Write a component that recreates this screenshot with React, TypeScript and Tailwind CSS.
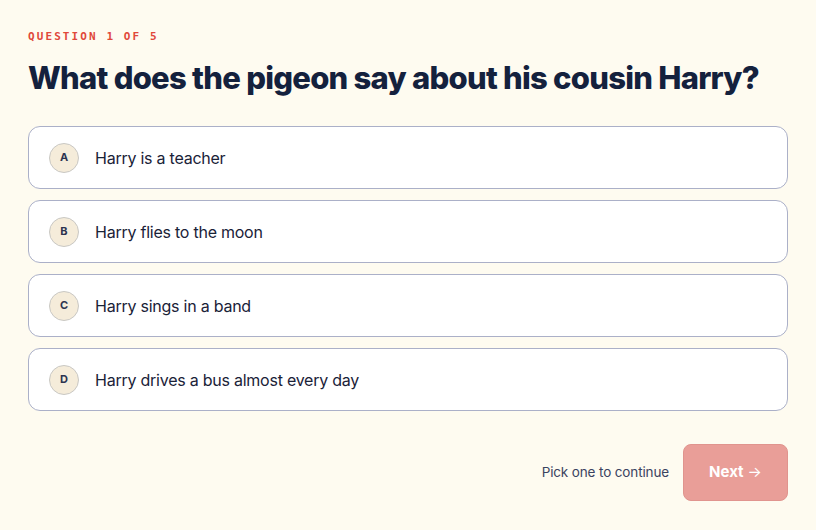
import React from "react";

const options = [
  { k: "A", t: "Harry is a teacher" },
  { k: "B", t: "Harry flies to the moon" },
  { k: "C", t: "Harry sings in a band" },
  { k: "D", t: "Harry drives a bus almost every day" },
];

export default function App() {
  return (
    <div className="w-[816px] h-[530px] bg-[#fefbf0] px-[28px] pt-[30px] flex flex-col" style={{ fontFamily: "Inter, 'Noto Sans', sans-serif" }}>
      <div className="text-[11px] font-bold tracking-[0.19em] text-[#e0483a] leading-[14px]" style={{ fontFamily: "'DejaVu Sans Mono', 'Liberation Mono', monospace" }}>
        QUESTION 1 OF 5
      </div>
      <h1 className="mt-[14px] text-[31px] font-extrabold text-[#14213d] tracking-[-0.024em] leading-[40px]">
        What does the pigeon say about his cousin Harry?
      </h1>
      <div className="mt-[28px] flex flex-col gap-[11px]">
        {options.map((o) => (
          <div key={o.k} className="h-[63px] rounded-[12px] border border-[#abb0c8] bg-white flex items-center pl-[20px]">
            <div className="w-[30px] h-[30px] rounded-full bg-[#f5ecda] border border-[#c9c8c4] flex items-center justify-center text-[11px] font-bold text-[#2c3450]">
              {o.k}
            </div>
            <div className="ml-[16px] text-[16px] text-[#1a2238] tracking-[-0.015em]">{o.t}</div>
          </div>
        ))}
      </div>
      <div className="mt-[33px] flex items-center justify-end gap-[14px]">
        <div className="text-[13.5px] text-[#3b4360] tracking-[-0.01em]">Pick one to continue</div>
        <div className="w-[105px] h-[57px] rounded-[8px] bg-[#e99e98] border border-[#e0948e] flex items-center justify-center text-white text-[15px] font-bold">
          Next <span className="ml-[4px] font-normal">→</span>
        </div>
      </div>
    </div>
  );
}
